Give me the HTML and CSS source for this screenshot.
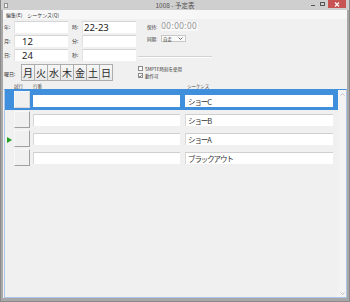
FILE: index.html
```html
<!DOCTYPE html>
<html lang="ja">
<head>
<meta charset="utf-8">
<title>1008 - 予定表</title>
<link rel="stylesheet" href="styles.css">
</head>
<body>
<div class="win">
  <div class="titlebar">
    <span class="appicon"></span>
    <span class="title">1008 - 予定表</span>
    <div class="caption">
      <span class="cap-min"></span>
      <span class="cap-max"></span>
      <span class="cap-close"><svg width="6" height="5" viewBox="0 0 6 5"><path d="M1 0.5 L5 4.5 M5 0.5 L1 4.5" stroke="#fff" stroke-width="1.1"/></svg></span>
    </div>
  </div>
  <div class="client">
    <div class="menubar"><span>編集(E)</span><span>シーケンス(Q)</span></div>
    <div class="form">
      <div class="grid">
        <span class="lbl">年:</span><span class="box boxl"></span>
        <span class="lbl lbl2">時:</span><span class="box">22-23</span>
        <div class="side">
          <div class="srow srow1"><span class="slbl">保持:</span><span class="timebox">00:00:00</span></div>
          <div class="srow srow2"><span class="slbl">同期:</span><span class="combo"><span>自走</span><svg width="5" height="3" viewBox="0 0 5 3"><path d="M0.5 0.5 L2.5 2.5 L4.5 0.5" fill="none" stroke="#555" stroke-width="0.9"/></svg></span></div>
          <div class="sep"></div>
        </div>
        <span class="lbl">月:</span><span class="box boxl">12</span>
        <span class="lbl lbl2">分:</span><span class="box"></span>
        <span class="lbl">日:</span><span class="box boxl">24</span>
        <span class="lbl lbl2">秒:</span><span class="box"></span>
      </div>
      <div class="wkrow">
        <div class="wkleft">
          <span class="wklbl">曜日:</span>
          <div class="days">
            <span class="day">月</span><span class="day">火</span><span class="day">水</span><span class="day">木</span><span class="day">金</span><span class="day">土</span><span class="day">日</span>
          </div>
        </div>
        <div class="checks">
          <div class="chk"><span class="cb"></span><span>SMPTE時刻を使用</span></div>
          <div class="chk"><span class="cb"><svg width="4" height="4" viewBox="0 0 4 4"><path d="M0.4 2 L1.5 3.2 L3.6 0.6" fill="none" stroke="#222" stroke-width="0.8"/></svg></span><span>動作可</span></div>
        </div>
      </div>
      <div class="hdr"><span class="h1">試行</span><span class="h2">行番</span><span class="h3">シーケンス</span></div>
    </div>
    <div class="list">
      <div class="rows">
        <div class="row sel"><span class="mark"></span><span class="btn"></span><span class="fld f1"></span><span class="fld f2">ショーC</span></div>
        <div class="row"><span class="mark"></span><span class="btn"></span><span class="fld f1"></span><span class="fld f2">ショーB</span></div>
        <div class="row"><span class="mark"><span class="tri"></span></span><span class="btn"></span><span class="fld f1"></span><span class="fld f2">ショーA</span></div>
        <div class="row"><span class="mark"></span><span class="btn"></span><span class="fld f1"></span><span class="fld f2">ブラックアウト</span></div>
      </div>
      <div class="vscroll">
        <svg width="5" height="3" viewBox="0 0 5 3"><path d="M0.5 2.5 L2.5 0.5 L4.5 2.5" fill="none" stroke="#bbb" stroke-width="0.9"/></svg>
        <svg width="5" height="3" viewBox="0 0 5 3"><path d="M0.5 0.5 L2.5 2.5 L4.5 0.5" fill="none" stroke="#bbb" stroke-width="0.9"/></svg>
      </div>
    </div>
  </div>
</div>
</body>
</html>
```

FILE: styles.css
```css
* { box-sizing: border-box; }
html, body { margin: 0; padding: 0; }
body {
  width: 350px;
  height: 302px;
  overflow: hidden;
  font-family: "Noto Sans CJK JP", "Noto Sans", sans-serif;
  color: #333;
}
.win {
  width: 350px;
  height: 302px;
  background: #a8a8a8;
  border: 1px solid #8a8a8a;
  border-top: none;
  display: flex;
  flex-direction: column;
  padding: 0 2px 3px 2px;
}
.titlebar {
  height: 10px;
  margin: 0 -2px;
  background: #cfcfcf;
  display: flex;
  align-items: center;
  position: relative;
  flex: none;
}
.appicon {
  width: 4px;
  height: 5px;
  margin-left: 3px;
  background: #f4f4f4;
  border: 1px solid #8f8f8f;
}
.title {
  position: absolute;
  left: 0;
  right: 0;
  text-align: center;
  font-size: 6.5px;
  line-height: 10px;
  color: #505050;
}
.caption {
  margin-left: auto;
  display: flex;
  align-items: flex-start;
  height: 10px;
  position: relative;
}
.cap-min {
  width: 4px;
  height: 1px;
  background: #555;
  margin-top: 5px;
  margin-right: 5px;
}
.cap-max {
  width: 5px;
  height: 4px;
  border: 1px solid #555;
  border-top-width: 1.5px;
  margin-top: 2px;
  margin-right: 3px;
}
.cap-close {
  width: 18px;
  height: 8px;
  background: #c75353;
  margin-right: 3px;
  display: flex;
  align-items: center;
  justify-content: center;
}
.client {
  flex: 1;
  background: #f0f0f0;
  display: flex;
  flex-direction: column;
  min-height: 0;
}
.menubar {
  height: 9px;
  background: #f7f7f7;
  display: flex;
  gap: 5px;
  padding-left: 3px;
  font-size: 5px;
  line-height: 9px;
  color: #333;
  flex: none;
}
.form {
  flex: none;
  padding-top: 2px;
  height: 70px;
}
.grid {
  display: grid;
  grid-template-columns: 11px 54px 14px 54px 1fr;
  grid-template-rows: 12px 12px 12px;
  row-gap: 2px;
}
.lbl {
  font-size: 5px;
  line-height: 12px;
  padding-left: 1px;
  color: #333;
}
.lbl2 { padding-left: 4px; }
.box {
  background: #fff;
  border-top: 1px solid #d4d4d4;
  border-left: 1px solid #e2e2e2;
  font-size: 9.5px;
  line-height: 11px;
  padding-left: 1px;
  color: #222;
  font-family: "Noto Sans", "Noto Sans CJK JP", sans-serif;
}
.boxl { padding-left: 7px; }
.side {
  grid-column: 5;
  grid-row: 1 / 4;
  padding-left: 2px;
  display: flex;
  flex-direction: column;
}
.srow {
  display: flex;
  align-items: center;
  padding-left: 9px;
}
.srow1 { margin-top: 1px; height: 9px; }
.srow2 { margin-top: 4px; height: 7px; }
.slbl {
  width: 14px;
  font-size: 4.5px;
  color: #333;
}
.timebox {
  width: 37px;
  height: 9px;
  background: #f8f8f8;
  font-size: 8px;
  line-height: 9px;
  color: #9a9a9a;
  font-family: "DejaVu Sans", sans-serif;
  padding-left: 0;
}
.combo {
  width: 25px;
  height: 7px;
  background: #fafafa;
  border: 1px solid #c8c8c8;
  display: flex;
  align-items: center;
  justify-content: space-between;
  padding: 0 2px 0 1px;
  font-size: 4.5px;
}
.sep {
  margin-top: 14px;
  width: 74px;
  height: 2px;
  border-top: 1px solid #d2d2d2;
  border-bottom: 1px solid #fdfdfd;
}
.wkrow {
  margin-top: 3px;
  height: 17px;
  display: flex;
}
.wkleft {
  width: 135px;
  display: flex;
  align-items: center;
}
.wklbl {
  width: 18px;
  padding-left: 1px;
  font-size: 5px;
  margin-top: 2px;
}
.days {
  display: flex;
  height: 17px;
  border-left: 1px solid #adadad;
}
.day {
  width: 13px;
  height: 17px;
  border: 1px solid #adadad;
  border-left: none;
  background: linear-gradient(#f6f6f6, #e8e8e8);
  font-size: 10px;
  line-height: 15px;
  text-align: center;
  color: #2a2a2a;
}
.checks {
  display: flex;
  flex-direction: column;
  gap: 2px;
  padding-top: 2px;
}
.chk {
  display: flex;
  align-items: center;
  gap: 2px;
  height: 5px;
  font-size: 4.5px;
  color: #333;
}
.cb {
  width: 5px;
  height: 5px;
  border: 1px solid #8a8a8a;
  background: #fff;
  display: flex;
  align-items: center;
  justify-content: center;
}
.hdr {
  height: 8px;
  display: flex;
  font-size: 4.5px;
  line-height: 10px;
  color: #444;
}
.h1 { margin-left: 11px; width: 19px; }
.h2 { width: 154px; }
.list {
  flex: 1;
  min-height: 0;
  margin: 0 0 0 1px;
  border: 1px solid #a9c6e8;
  border-top: 1px solid #3f8fdd;
  display: flex;
}
.rows {
  flex: 1;
}
.row {
  height: 19px;
  display: flex;
  align-items: flex-start;
  padding-left: 2px;
}
.row.sel {
  background: #3f8fdd;
  box-shadow: 0 1px 0 #3f8fdd;
  position: relative;
}
.mark {
  width: 7px;
  height: 19px;
  display: flex;
  padding-top: 9px;
}
.tri {
  width: 0;
  height: 0;
  border-top: 3px solid transparent;
  border-bottom: 3px solid transparent;
  border-left: 5px solid #22a022;
}
.btn {
  width: 16px;
  height: 17px;
  margin-top: 2px;
  background: #f0f0f0;
  border-top: 1px solid #f8f8f8;
  border-left: 1px solid #f8f8f8;
  border-right: 1px solid #a0a0a0;
  border-bottom: 1px solid #a0a0a0;
}
.sel .btn {
  margin-top: 1px;
  border-right-color: #d8d8d8;
  border-bottom-color: #d8d8d8;
}
.fld {
  height: 12px;
  margin-top: 5px;
  background: #fff;
  border-top: 1px solid #cfcfcf;
  border-left: 1px solid #d8d8d8;
  font-size: 7.5px;
  letter-spacing: -1.1px;
  line-height: 11px;
  padding-left: 2px;
  color: #333;
  white-space: nowrap;
}
.f1 { width: 147px; margin-left: 3px; }
.f2 { width: 148px; margin-left: 5px; }
.sel .fld { border-color: #fff; }
.vscroll {
  width: 8px;
  background: #f3f3f3;
  display: flex;
  flex-direction: column;
  align-items: center;
  justify-content: space-between;
  padding: 3px 0 2px;
}
```
